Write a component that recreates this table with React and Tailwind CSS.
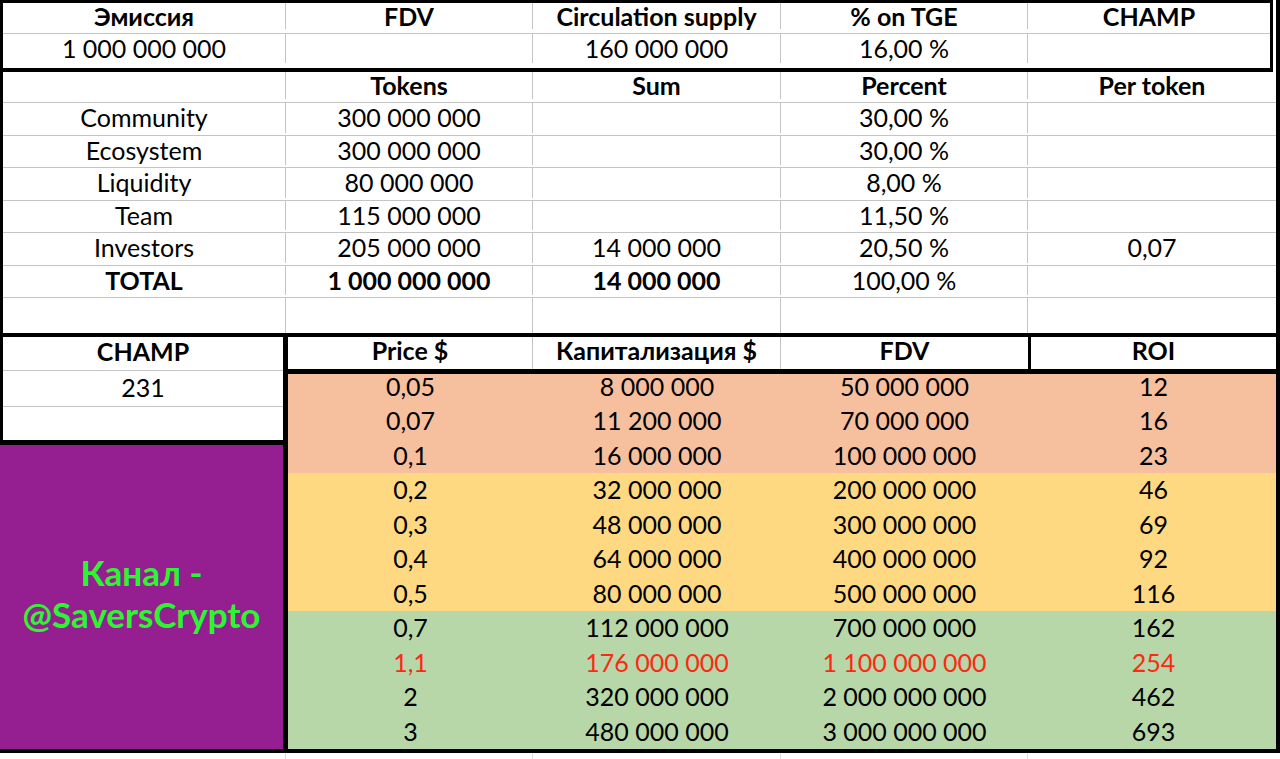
const top = [
  ['Эмиссия', 'FDV', 'Circulation supply', '% on TGE', 'CHAMP'],
  ['1 000 000 000', '', '160 000 000', '16,00 %', ''],
];

const allocation = [
  ['Community', '300 000 000', '', '30,00 %', ''],
  ['Ecosystem', '300 000 000', '', '30,00 %', ''],
  ['Liquidity', '80 000 000', '', '8,00 %', ''],
  ['Team', '115 000 000', '', '11,50 %', ''],
  ['Investors', '205 000 000', '14 000 000', '20,50 %', '0,07'],
];

const prices = [
  { cells: ['0,05', '8 000 000', '50 000 000', '12'], bg: 'bg-[#f6bf9e]' },
  { cells: ['0,07', '11 200 000', '70 000 000', '16'], bg: 'bg-[#f6bf9e]' },
  { cells: ['0,1', '16 000 000', '100 000 000', '23'], bg: 'bg-[#f6bf9e]' },
  { cells: ['0,2', '32 000 000', '200 000 000', '46'], bg: 'bg-[#fed982]' },
  { cells: ['0,3', '48 000 000', '300 000 000', '69'], bg: 'bg-[#fed982]' },
  { cells: ['0,4', '64 000 000', '400 000 000', '92'], bg: 'bg-[#fed982]' },
  { cells: ['0,5', '80 000 000', '500 000 000', '116'], bg: 'bg-[#fed982]' },
  { cells: ['0,7', '112 000 000', '700 000 000', '162'], bg: 'bg-[#b7d7a8]' },
  { cells: ['1,1', '176 000 000', '1 100 000 000', '254'], bg: 'bg-[#b7d7a8]', red: true },
  { cells: ['2', '320 000 000', '2 000 000 000', '462'], bg: 'bg-[#b7d7a8]' },
  { cells: ['3', '480 000 000', '3 000 000 000', '693'], bg: 'bg-[#b7d7a8]' },
];

const Cell = ({ children, bold, last, className = '' }) => (
  <div
    className={`flex items-center justify-center whitespace-nowrap ${last ? '' : 'border-r border-[#c4c4c4]'} ${bold ? 'font-bold' : ''} ${className}`}
  >
    {children}
  </div>
);

const Row = ({ cells, bold, boldFrom, className = '' }) => (
  <div className={`grid grid-cols-[283px_247px_248px_247px_1fr] ${className}`}>
    {cells.map((text, i) => (
      <Cell key={i} last={i === cells.length - 1} bold={bold || (boldFrom && boldFrom(i))}>
        {text}
      </Cell>
    ))}
  </div>
);

export default function App() {
  return (
    <div className="h-[759px] w-[1280px] overflow-hidden bg-white text-[25px] leading-none text-black [font-family:Lato,'Open_Sans',sans-serif]">
      <div className="w-[1280px] border-r-4 border-black">
        {/* emission block */}
        <div className="w-[1273px] border-x-[3px] border-b-4 border-t-[3px] border-black">
          <Row cells={top[0]} bold className="h-[31px] border-b border-[#c4c4c4] pb-[4px]" />
          <Row cells={top[1]} className="h-[34px] pb-[5px]" />
        </div>

        {/* allocation block */}
        <div className="border-b-4 border-l-[3px] border-black">
          <Row cells={['', 'Tokens', 'Sum', 'Percent', 'Per token']} bold className="h-[31px] border-b border-[#c4c4c4] pb-[3px]" />
          {allocation.map((r) => (
            <Row key={r[0]} cells={r} className="h-[32.5px] border-b border-[#c4c4c4] pb-[2px]" />
          ))}
          <Row
            cells={['TOTAL', '1 000 000 000', '14 000 000', '100,00 %', '']}
            boldFrom={(i) => i < 3}
            className="h-[32.5px] border-b border-[#c4c4c4] pb-[2px]"
          />
          <Row cells={['', '', '', '', '']} className="h-[35px]" />
        </div>

        {/* price block */}
        <div className="flex h-[416px] border-b-4 border-black">
          <div className="flex w-[283px] flex-col">
            <div className="border-l-[3px] border-black">
              <div className="flex h-[34px] items-center justify-center border-b border-[#c4c4c4] pb-[5px] font-bold">CHAMP</div>
              <div className="flex h-[36px] items-center justify-center border-b border-[#c4c4c4] pb-[2px]">231</div>
              <div className="h-[33px]" />
            </div>
            <div className="h-[5px] bg-black" />
            <div className="flex flex-1 flex-col items-center justify-center bg-[#951f91] pb-[8px] text-[35px] font-bold leading-[42px] text-[#2ef531]">
              <span>Канал -</span>
              <span>@SaversCrypto</span>
            </div>
          </div>

          <div className="flex flex-1 flex-col border-l-[5px] border-black">
            <div className="grid h-[37px] grid-cols-[245px_248px_247px_1fr] border-b-[5px] border-black font-bold">
              <Cell className="pb-[5px]">Price $</Cell>
              <Cell className="pb-[5px]">Капитализация $</Cell>
              <Cell className="border-r-0 pb-[5px]">FDV</Cell>
              <Cell last className="border-l-[3px] border-black pb-[5px]">ROI</Cell>
            </div>
            {prices.map((p, idx) => (
              <div
                key={p.cells[0]}
                className={`grid grid-cols-[245px_248px_247px_1fr] ${p.bg} ${p.red ? 'text-[#fb2a14]' : ''} ${idx === 0 ? 'h-[29.5px] pb-[5px]' : 'h-[34.5px]'}`}
              >
                {p.cells.map((t, i) => (
                  <div key={i} className={`flex items-center justify-center whitespace-nowrap ${i === 3 ? 'pl-[3px]' : ''}`}>
                    {t}
                  </div>
                ))}
              </div>
            ))}
          </div>
        </div>
      </div>
      <div className="grid h-[10px] grid-cols-[286px_247px_248px_247px_1fr]">
        <div className="border-r border-[#dcdcdc]" />
        <div className="border-r border-[#dcdcdc]" />
        <div className="border-r border-[#dcdcdc]" />
        <div className="border-r border-[#dcdcdc]" />
        <div />
      </div>
    </div>
  );
}
